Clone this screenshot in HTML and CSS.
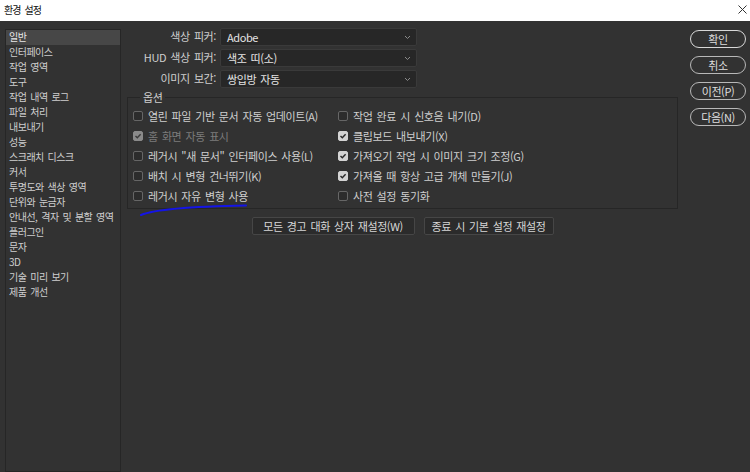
FILE: index.html
```html
<!DOCTYPE html>
<html lang="ko">
<head>
<meta charset="utf-8">
<title>환경 설정</title>
<link rel="stylesheet" href="styles.css">
</head>
<body>
<div class="titlebar">
  <span class="title">환경 설정</span>
  <svg class="close" width="9" height="9" viewBox="0 0 9 9"><path d="M0.5 0.5 L8.5 8.5 M8.5 0.5 L0.5 8.5" stroke="#333" stroke-width="1" fill="none"/></svg>
</div>
<div class="main">
  <ul class="sidebar">
    <li class="active">일반</li>
    <li>인터페이스</li>
    <li>작업 영역</li>
    <li>도구</li>
    <li>작업 내역 로그</li>
    <li>파일 처리</li>
    <li>내보내기</li>
    <li>성능</li>
    <li>스크래치 디스크</li>
    <li>커서</li>
    <li>투명도와 색상 영역</li>
    <li>단위와 눈금자</li>
    <li>안내선, 격자 및 분할 영역</li>
    <li>플러그인</li>
    <li>문자</li>
    <li>3D</li>
    <li>기술 미리 보기</li>
    <li>제품 개선</li>
  </ul>
  <div class="content">
    <div class="fields">
      <label class="field-label">색상 피커:</label>
      <div class="select"><span>Adobe</span><svg class="chev" width="7" height="5" viewBox="0 0 7 5"><path d="M1 1 L3.5 3.5 L6 1" stroke="#8a8a8a" fill="none"/></svg></div>
      <label class="field-label">HUD 색상 피커:</label>
      <div class="select"><span>색조 띠(소)</span><svg class="chev" width="7" height="5" viewBox="0 0 7 5"><path d="M1 1 L3.5 3.5 L6 1" stroke="#8a8a8a" fill="none"/></svg></div>
      <label class="field-label">이미지 보간:</label>
      <div class="select"><span>쌍입방 자동</span><svg class="chev" width="7" height="5" viewBox="0 0 7 5"><path d="M1 1 L3.5 3.5 L6 1" stroke="#8a8a8a" fill="none"/></svg></div>
    </div>
    <fieldset class="group">
      <legend class="group-title">옵션</legend>
      <div class="opts">
        <div class="opt"><span class="cb"></span><span>열린 파일 기반 문서 자동 업데이트(A)</span></div>
        <div class="opt"><span class="cb"></span><span>작업 완료 시 신호음 내기(D)</span></div>
        <div class="opt disabled"><span class="cb on"><svg width="8" height="8" viewBox="0 0 8 8"><path d="M1.5 4 L3.3 5.8 L6.6 2.2" stroke="#3a3a3a" stroke-width="1.4" fill="none"/></svg></span><span>홈 화면 자동 표시</span></div>
        <div class="opt"><span class="cb on"><svg width="8" height="8" viewBox="0 0 8 8"><path d="M1.5 4 L3.3 5.8 L6.6 2.2" stroke="#2a2a2a" stroke-width="1.4" fill="none"/></svg></span><span>클립보드 내보내기(X)</span></div>
        <div class="opt"><span class="cb"></span><span>레거시 "새 문서" 인터페이스 사용(L)</span></div>
        <div class="opt"><span class="cb on"><svg width="8" height="8" viewBox="0 0 8 8"><path d="M1.5 4 L3.3 5.8 L6.6 2.2" stroke="#2a2a2a" stroke-width="1.4" fill="none"/></svg></span><span>가져오기 작업 시 이미지 크기 조정(G)</span></div>
        <div class="opt"><span class="cb"></span><span>배치 시 변형 건너뛰기(K)</span></div>
        <div class="opt"><span class="cb on"><svg width="8" height="8" viewBox="0 0 8 8"><path d="M1.5 4 L3.3 5.8 L6.6 2.2" stroke="#2a2a2a" stroke-width="1.4" fill="none"/></svg></span><span>가져올 때 항상 고급 개체 만들기(J)</span></div>
        <div class="opt"><span class="cb"></span><span>레거시 자유 변형 사용</span></div>
        <div class="opt"><span class="cb"></span><span>사전 설정 동기화</span></div>
      </div>
    </fieldset>
    <div class="actions">
      <button class="btn btn-wide">모든 경고 대화 상자 재설정(W)</button>
      <button class="btn btn-mid">종료 시 기본 설정 재설정</button>
    </div>
  </div>
  <div class="side-buttons">
    <button class="pill primary">확인</button>
    <button class="pill">취소</button>
    <button class="pill">이전(P)</button>
    <button class="pill">다음(N)</button>
  </div>
</div>
<svg class="scribble" width="110" height="16" viewBox="0 0 110 16"><path d="M1 13 Q20 5 106 3.5" stroke="#1414e6" stroke-width="2" fill="none" stroke-linecap="round"/></svg>
</body>
</html>
```

FILE: styles.css
```css
* { box-sizing: border-box; }
html, body { margin: 0; }
body {
  width: 750px;
  height: 472px;
  overflow: hidden;
  position: relative;
  background: #323232;
  color: #cfcfcf;
  font-family: "Noto Sans CJK KR", "Noto Sans", sans-serif;
  font-size: 11px;
  letter-spacing: -0.4px;
  word-spacing: 1.5px;
}
.titlebar {
  height: 21px;
  background: #ffffff;
  color: #111;
  display: flex;
  align-items: center;
  justify-content: space-between;
  padding: 0 3px 3px 4px;
  font-size: 10px;
  letter-spacing: -0.9px;
  word-spacing: 2px;
}
.close { display: block; }
.main {
  display: flex;
  height: 451px;
}
.sidebar {
  list-style: none;
  margin: 8px 0 0 5px;
  padding: 0;
  width: 116px;
  height: 443px;
  border: 1px solid #262626;
  font-size: 10px;
  letter-spacing: -0.5px;
  word-spacing: 1.5px;
}
.sidebar li {
  height: 15px;
  line-height: 13px;
  padding-left: 3px;
  white-space: nowrap;
}
.sidebar li.active {
  background: #474747;
  color: #e6e6e6;
}
.content {
  width: 557px;
  padding-top: 7px;
}
.fields {
  display: grid;
  grid-template-columns: 95px 197px;
  column-gap: 4px;
  row-gap: 3px;
}
.field-label {
  text-align: right;
  line-height: 17px;
  white-space: nowrap;
}
.select {
  height: 18px;
  background: #272727;
  border: 1px solid #3a3a3a;
  border-radius: 2px;
  display: flex;
  align-items: center;
  justify-content: space-between;
  padding: 0 5px 1px 6px;
  color: #e4e4e4;
}
.chev { display: block; margin-top: 2px; }
.group {
  margin: 2px 0 0 6px;
  padding: 2px 0 2px 5px;
  border: 1px solid #262626;
  min-width: 0;
}
.group-title {
  margin-left: 7px;
  padding: 0 3px;
  line-height: 14px;
}
.opts {
  display: grid;
  grid-template-columns: 205px 1fr;
  grid-auto-rows: 20px;
}
.opt {
  display: flex;
  align-items: center;
  gap: 5px;
  white-space: nowrap;
}
.opt.disabled { color: #7c7c7c; }
.cb {
  width: 10px;
  height: 10px;
  flex: none;
  border: 1px solid #666;
  border-radius: 2px;
  background: #2c2c2c;
  display: flex;
  align-items: center;
  justify-content: center;
}
.cb svg { display: block; }
.cb.on {
  background: #d4d4d4;
  border-color: #d4d4d4;
}
.disabled .cb.on {
  background: #8a8a8a;
  border-color: #8a8a8a;
}
.actions {
  display: flex;
  justify-content: center;
  gap: 9px;
  margin: 8px 0 0 6px;
}
.btn {
  height: 18px;
  padding: 0 0 1px;
  background: #2b2b2b;
  border: 1px solid #464646;
  border-radius: 2px;
  color: #d6d6d6;
  font: inherit;
  letter-spacing: inherit;
  word-spacing: inherit;
}
.btn-wide { width: 163px; }
.btn-mid { width: 130px; }
.side-buttons {
  display: flex;
  flex-direction: column;
  gap: 8px;
  margin-left: 12px;
  padding-top: 9px;
}
.pill {
  width: 56px;
  height: 18px;
  padding: 0 0 1px;
  border: 1px solid #b8b8b8;
  border-radius: 9px;
  background: transparent;
  color: #dedede;
  font: inherit;
  letter-spacing: inherit;
  word-spacing: inherit;
}
.pill.primary { border-color: #d8d8d8; }
.scribble {
  position: absolute;
  left: 140px;
  top: 202px;
}
```
